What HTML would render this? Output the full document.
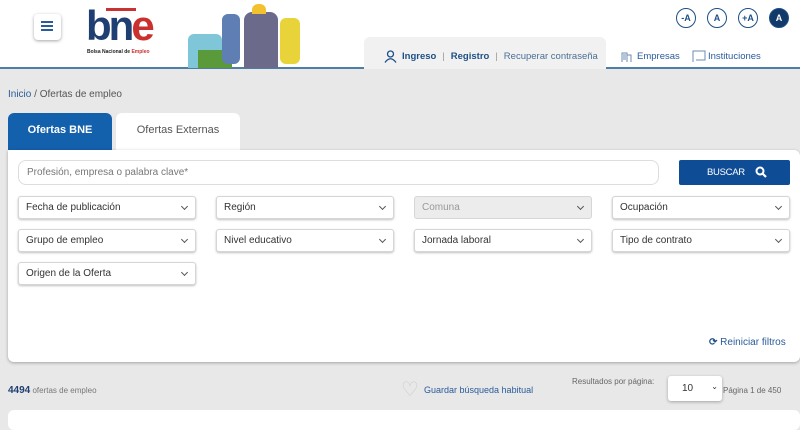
<!DOCTYPE html>
<html><head><meta charset="utf-8"><style>
*{box-sizing:border-box;margin:0;padding:0}
body{width:800px;height:423px;overflow:hidden;background:#e8e8e8;font-family:"Liberation Sans",sans-serif;position:relative;color:#333}
.abs{position:absolute}
.hdr{left:0;top:0;width:800px;height:69px;background:#fff;border-bottom:2px solid #4d7fa6}
.sel{position:absolute;height:23px;background:#fff;border:1px solid #d6d6d6;border-radius:3px;box-shadow:0 1px 2px rgba(0,0,0,.25);font-size:10px;color:#333;padding:5px 0 0 7px}
.sel:after{content:"";position:absolute;right:8px;top:7px;width:4px;height:4px;border-right:1px solid #555;border-bottom:1px solid #555;transform:rotate(45deg)}
.c1{left:18px;width:178px}.c2{left:216px;width:178px}.c3{left:414px;width:178px}.c4{left:612px;width:178px}
.circ{position:absolute;top:8px;width:20px;height:20px;border:1px solid #1d4f86;border-radius:50%;font-size:9px;font-weight:bold;color:#1d4f86;text-align:center;line-height:18px}
</style></head><body>
<div class="abs hdr"></div>
<div class="abs" style="left:34px;top:14px;width:27px;height:26px;background:#fff;border-radius:4px;box-shadow:0 1px 3px rgba(0,0,0,.35)"></div>
<div class="abs" style="left:41px;top:21px;width:12px;height:2px;background:#2a5b9a;box-shadow:0 4px 0 #2a5b9a,0 8px 0 #2a5b9a"></div>
<div class="abs" style="left:106px;top:8px;width:30px;height:3px;background:#c83232"></div>
<div class="abs" style="left:86px;top:4px;font-size:42px;font-weight:bold;color:#1f3f73;letter-spacing:-3px;line-height:44px">bn<span style="color:#c8312e">e</span></div>
<div class="abs" style="left:87px;top:49px;font-size:5px;font-weight:bold;color:#222">Bolsa Nacional de <span style="color:#c8312e">Empleo</span></div>
<div class="abs" style="left:188px;top:34px;width:34px;height:34px;background:#7fc6d8;border-radius:6px 6px 0 0"></div>
<div class="abs" style="left:198px;top:50px;width:34px;height:18px;background:#5a9a3a"></div>
<div class="abs" style="left:222px;top:14px;width:18px;height:50px;background:#5f7fb4;border-radius:6px"></div>
<div class="abs" style="left:244px;top:12px;width:34px;height:56px;background:#6b6a8a;border-radius:8px 8px 0 0"></div>
<div class="abs" style="left:252px;top:4px;width:14px;height:10px;background:#f2c12e;border-radius:6px 6px 0 0"></div>
<div class="abs" style="left:280px;top:18px;width:20px;height:46px;background:#e8d43a;border-radius:6px"></div>
<div class="circ" style="left:676px">-A</div><div class="circ" style="left:707px">A</div><div class="circ" style="left:738px">+A</div>
<div class="circ" style="left:769px;background:#113a6b;color:#fff">A</div>
<div class="abs" style="left:364px;top:37px;width:242px;height:32px;background:#f1f1f1;border-radius:6px 6px 0 0"></div>
<div class="abs" style="left:384px;top:50px;width:13px;height:13px"><svg width="13" height="13"><circle cx="6.5" cy="4" r="3" fill="none" stroke="#1d4f86" stroke-width="1.3"/><path d="M1 12.5 Q6.5 5 12 12.5" fill="none" stroke="#1d4f86" stroke-width="1.3"/></svg></div>
<div class="abs" style="left:402px;top:51px;font-size:9.5px;color:#1d4f86;white-space:nowrap"><b>Ingreso</b><span style="color:#999;margin:0 6px">|</span><b>Registro</b><span style="color:#999;margin:0 6px">|</span><span style="color:#4a6f96">Recuperar contraseña</span></div>
<div class="abs" style="left:620px;top:49px"><svg width="14" height="14"><path d="M2 13V4h5v9M7 6h4v7M3 6h3M3 8h3M3 10h3" fill="none" stroke="#6c8db0" stroke-width="1"/></svg></div>
<div class="abs" style="left:637px;top:51px;font-size:9.5px;color:#2a5b9a">Empresas</div>
<div class="abs" style="left:692px;top:50px"><svg width="14" height="13"><path d="M1 12V1h12v9H4" fill="none" stroke="#6c8db0" stroke-width="1"/></svg></div>
<div class="abs" style="left:708px;top:51px;font-size:9.5px;color:#2a5b9a">Instituciones</div>
<div class="abs" style="left:8px;top:89px;font-size:10px;color:#555"><span style="color:#2a5b9a">Inicio</span> / Ofertas de empleo</div>
<div class="abs" style="left:8px;top:113px;width:104px;height:37px;background:#1360ad;border-radius:6px 6px 0 0;color:#fff;font-size:11px;font-weight:bold;text-align:center;line-height:34px">Ofertas BNE</div>
<div class="abs" style="left:116px;top:113px;width:124px;height:37px;background:#fff;border-radius:6px 6px 0 0;color:#555;font-size:11px;text-align:center;line-height:34px">Ofertas Externas</div>
<div class="abs" style="left:8px;top:150px;width:792px;height:212px;background:#fff;border-radius:0 6px 6px 6px;box-shadow:0 1px 3px rgba(0,0,0,.3)"></div>
<div class="abs" style="left:18px;top:160px;width:641px;height:25px;border:1px solid #ddd;border-radius:8px;font-size:10px;color:#777;padding:6px 0 0 8px">Profesión, empresa o palabra clave*</div>
<div class="abs" style="left:679px;top:160px;width:111px;height:25px;background:#0f4c96;border-radius:2px;color:#fff;font-size:9.5px;line-height:25px;padding-left:28px;letter-spacing:-0.3px">BUSCAR<svg width="12" height="12" style="position:absolute;left:76px;top:6px"><circle cx="5" cy="5" r="3.5" fill="none" stroke="#fff" stroke-width="2"/><path d="M7.5 7.5L11 11" stroke="#fff" stroke-width="2.2"/></svg></div>
<div class="sel c1" style="top:196px">Fecha de publicación</div>
<div class="sel c2" style="top:196px">Región</div>
<div class="sel c3" style="top:196px;background:#ececec;color:#999;box-shadow:none">Comuna</div>
<div class="sel c4" style="top:196px">Ocupación</div>
<div class="sel c1" style="top:229px">Grupo de empleo</div>
<div class="sel c2" style="top:229px">Nivel educativo</div>
<div class="sel c3" style="top:229px">Jornada laboral</div>
<div class="sel c4" style="top:229px">Tipo de contrato</div>
<div class="sel c1" style="top:262px">Origen de la Oferta</div>
<div class="abs" style="left:709px;top:337px;font-size:10px;color:#2a5b9a"><b style="color:#1d4f86">⟳</b> Reiniciar filtros</div>
<div class="abs" style="left:8px;top:385px;font-size:8px;color:#777"><b style="font-size:10px;color:#1f3f73">4494</b> ofertas de empleo</div>
<div class="abs" style="left:401px;top:380px;font-size:20px;color:#ccc;line-height:20px">♡</div>
<div class="abs" style="left:424px;top:385px;font-size:9px;color:#2a5b9a">Guardar búsqueda habitual</div>
<div class="abs" style="left:572px;top:377px;font-size:8px;color:#666">Resultados por página:</div>
<div class="abs" style="left:668px;top:376px;width:54px;height:25px;background:#fff;border-radius:3px;box-shadow:0 1px 3px rgba(0,0,0,.3);font-size:10px;padding:7px 0 0 14px">10<span style="position:absolute;right:4px;top:6px;font-size:8px">⌄</span></div>
<div class="abs" style="left:723px;top:386px;font-size:8px;color:#666">Página 1 de 450</div>
<div class="abs" style="left:8px;top:410px;width:792px;height:20px;background:#fff;border-radius:6px"></div>
</body></html>
